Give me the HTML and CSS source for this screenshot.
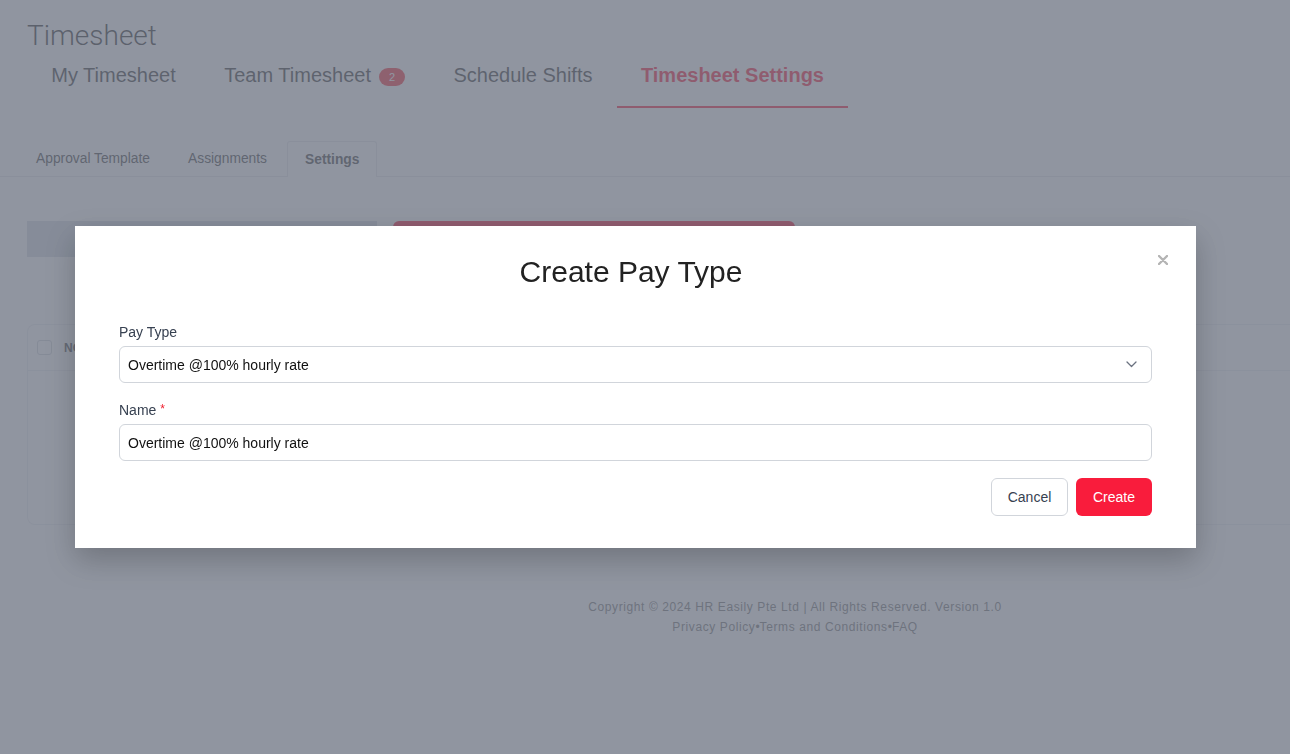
FILE: index.html
```html
<!DOCTYPE html>
<html lang="en">
<head>
    <meta charset="UTF-8">
    <meta name="viewport" content="width=device-width, initial-scale=1.0">
    <title>Timesheet - Create Pay Type</title>
    <link rel="stylesheet" href="styles.css">
</head>
<body>
    <!-- Page Header -->
    <header class="page-header">
        <h1>Timesheet</h1>
        <nav class="main-tabs">
            <a class="main-tab">My Timesheet</a>
            <a class="main-tab">Team Timesheet <span class="badge">2</span></a>
            <a class="main-tab">Schedule Shifts</a>
            <a class="main-tab active">Timesheet Settings</a>
        </nav>
    </header>

    <!-- Sub Tabs -->
    <div class="sub-tabs">
        <a class="sub-tab">Approval Template</a>
        <a class="sub-tab">Assignments</a>
        <a class="sub-tab active">Settings</a>
    </div>

    <!-- Settings Content -->
    <main class="content">
        <div class="toolbar">
            <div class="search-box"></div>
            <button class="primary-wide"></button>
        </div>
        <div class="card">
            <div class="card-head">
                <span class="checkbox"></span>
                <span class="col-title">NO.</span>
            </div>
        </div>
    </main>

    <!-- Footer -->
    <footer class="footer">
        <p>Copyright © 2024 HR Easily Pte Ltd | All Rights Reserved. Version 1.0</p>
        <p>Privacy Policy<span class="dot">•</span>Terms and Conditions<span class="dot">•</span>FAQ</p>
    </footer>

    <!-- Modal -->
    <div class="overlay"></div>
    <div class="modal">
        <button class="modal-close" aria-label="Close">
            <svg width="10" height="10" viewBox="0 0 10 10"><path d="M1 1L9 9M9 1L1 9" stroke="#b4b4b4" stroke-width="2.4" stroke-linecap="round"/></svg>
        </button>
        <h2 class="modal-title">Create Pay Type</h2>
        <form class="modal-form">
            <div class="field">
                <label>Pay Type</label>
                <div class="select">
                    <span>Overtime @100% hourly rate</span>
                    <svg width="11" height="7" viewBox="0 0 11 7"><path d="M1 1L5.5 5.5L10 1" fill="none" stroke="#6b7280" stroke-width="1.3" stroke-linecap="round" stroke-linejoin="round"/></svg>
                </div>
            </div>
            <div class="field">
                <label>Name <span class="required">*</span></label>
                <input class="text-input" type="text" value="Overtime @100% hourly rate">
            </div>
            <div class="modal-actions">
                <button type="button" class="btn btn-cancel">Cancel</button>
                <button type="button" class="btn btn-create">Create</button>
            </div>
        </form>
    </div>
</body>
</html>
```

FILE: styles.css
```css
* {
    margin: 0;
    padding: 0;
    box-sizing: border-box;
}

body {
    font-family: "Liberation Sans", Arial, sans-serif;
    background-color: #fff;
    color: #333;
    width: 1290px;
    height: 754px;
    overflow: hidden;
}

/* Header */
.page-header {
    padding: 18px 0 0 27px;
}

.page-header h1 {
    font-family: Roboto, "Liberation Sans", sans-serif;
    font-weight: 300;
    font-size: 28px;
    line-height: 36px;
    color: #333;
}

.main-tabs {
    display: flex;
}

.main-tab {
    display: flex;
    align-items: center;
    gap: 8px;
    padding: 10px 24.25px 20px;
    font-size: 20px;
    line-height: 22px;
    color: #3a3a3a;
    border-bottom: 2px solid transparent;
}

.main-tab.active {
    color: #f91c3c;
    font-weight: bold;
    border-bottom-color: #f91c3c;
}

.badge {
    display: inline-block;
    min-width: 26px;
    height: 18px;
    line-height: 18px;
    border-radius: 9px;
    background-color: #f5333f;
    color: #fff;
    font-size: 11px;
    text-align: center;
    margin-top: 3px;
}

/* Sub tabs */
.sub-tabs {
    display: flex;
    margin-top: 33px;
    padding-left: 18px;
    border-bottom: 1px solid #e5e7eb;
}

.sub-tab {
    padding: 0 17px;
    margin-right: 2px;
    font-size: 13.8px;
    line-height: 34px;
    color: #444;
    border: 1px solid transparent;
    border-bottom: none;
}

.sub-tab.active {
    font-weight: bold;
    border-color: #e5e7eb;
    border-radius: 3px 3px 0 0;
    background-color: #fff;
    margin-bottom: -1px;
    line-height: 35px;
}

/* Content */
.content {
    padding: 44px 0 0 27px;
}

.toolbar {
    display: flex;
    gap: 16px;
}

.search-box {
    width: 350px;
    height: 36px;
    background-color: #d5dbe3;
}

.primary-wide {
    width: 402px;
    height: 36px;
    border: none;
    border-radius: 6px;
    background-color: #f91c3c;
}

.card {
    margin-top: 67px;
    height: 201px;
    border: 1px solid #eceef1;
    border-right: none;
    border-radius: 8px 0 0 8px;
    background-color: #fff;
}

.card-head {
    display: flex;
    align-items: center;
    gap: 12px;
    height: 46px;
    padding-left: 9px;
    border-bottom: 1px solid #eceef1;
}

.checkbox {
    width: 15px;
    height: 15px;
    border: 1px solid #d1d5db;
    border-radius: 3px;
}

.col-title {
    font-size: 12px;
    font-weight: bold;
    color: #555;
}

/* Footer */
.footer {
    margin-top: 72px;
    padding-left: 300px;
    text-align: center;
    font-size: 12px;
    line-height: 20px;
    letter-spacing: 0.6px;
    color: #777;
}

.dot {
    letter-spacing: 0;
}

/* Modal */
.overlay {
    position: fixed;
    inset: 0;
    background-color: rgba(107, 114, 128, 0.75);
}

.modal {
    position: fixed;
    top: 226px;
    left: 75px;
    width: 1121px;
    padding: 21px 44px 32px;
    background-color: #fff;
    box-shadow: 0 12px 28px rgba(0, 0, 0, 0.22);
}

.modal-close {
    position: absolute;
    top: 29px;
    right: 28px;
    width: 10px;
    height: 10px;
    border: none;
    background: none;
    display: flex;
}

.modal-title {
    text-align: center;
    font-size: 30px;
    line-height: 50px;
    font-weight: normal;
    color: #222;
    padding-right: 9px;
}

.modal-form {
    margin-top: 25px;
}

.field {
    margin-bottom: 17px;
}

.field label {
    display: block;
    height: 20px;
    font-size: 14px;
    line-height: 20px;
    margin-bottom: 4px;
    color: #374151;
}

.required {
    color: #ef1c2c;
    font-size: 12px;
    line-height: 0;
    vertical-align: 2px;
}

.select,
.text-input {
    display: flex;
    align-items: center;
    justify-content: space-between;
    width: 100%;
    height: 37px;
    padding: 0 14px 0 8px;
    border: 1px solid #d1d5db;
    border-radius: 6px;
    font-family: "Liberation Sans", Arial, sans-serif;
    font-size: 14px;
    color: #111;
    background-color: #fff;
}

.text-input {
    outline: none;
}

.modal-actions {
    display: flex;
    justify-content: flex-end;
    gap: 8px;
}

.btn {
    height: 38px;
    border-radius: 6px;
    font-family: "Liberation Sans", Arial, sans-serif;
    font-size: 14px;
    cursor: pointer;
}

.btn-cancel {
    width: 77px;
    border: 1px solid #d1d5db;
    background-color: #fff;
    color: #374151;
}

.btn-create {
    width: 76px;
    border: none;
    background-color: #f91c3c;
    color: #fff;
}
```
